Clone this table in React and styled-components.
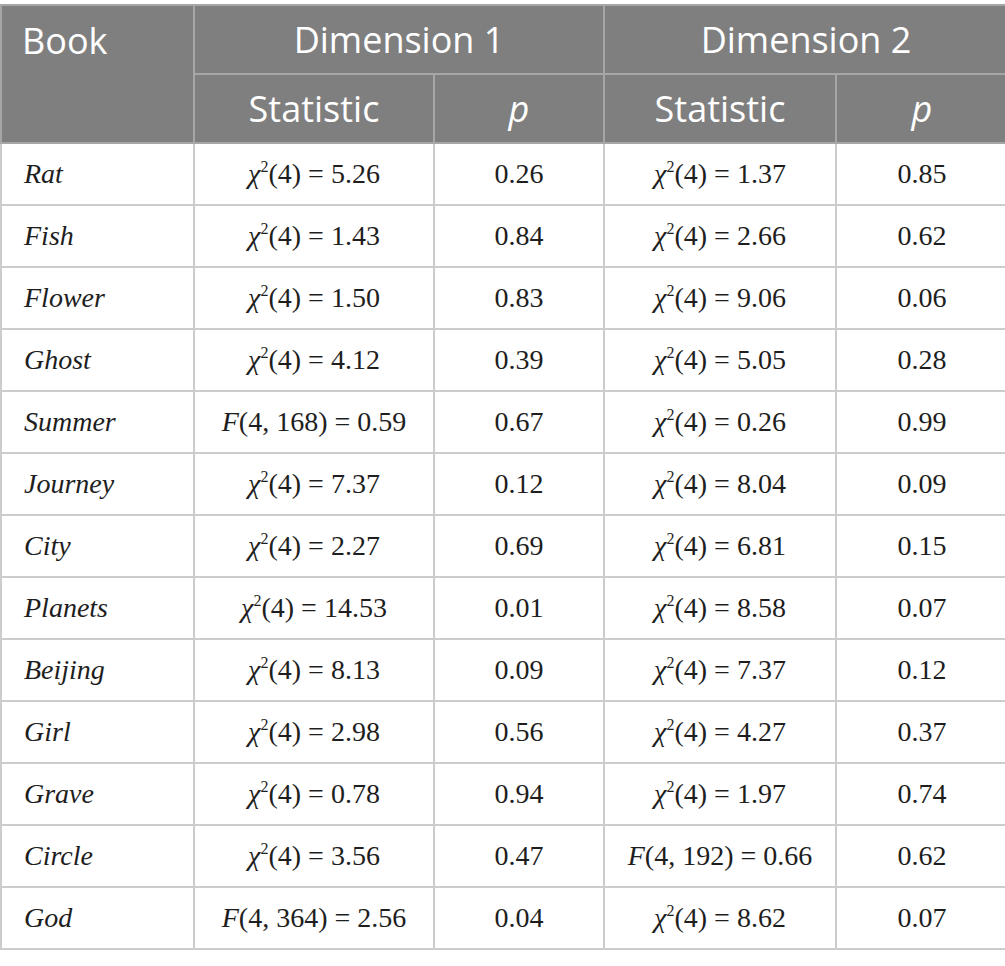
import styled, { createGlobalStyle } from "styled-components";

const GlobalStyle = createGlobalStyle`
  body {
    margin: 0;
    background: #ffffff;
  }
`;

const Wrap = styled.div`
  padding-top: 4px;
  width: 1005px;
  overflow: hidden;
`;

const Table = styled.table`
  border-collapse: collapse;
  width: 1007px;
  table-layout: fixed;
`;

const HeadCell = styled.th`
  background: #7f7f7f;
  color: #ffffff;
  font-family: "Open Sans", "Liberation Sans", sans-serif;
  font-weight: 400;
  font-size: 36px;
  border: 2px solid #a6a6a6;
  text-align: ${(p) => (p.$left ? "left" : "center")};
  vertical-align: ${(p) => (p.$top ? "top" : "middle")};
  padding: ${(p) => (p.$left ? "13px 20px 0" : "0")};
  height: ${(p) => p.$h || 67}px;
  font-style: ${(p) => (p.$italic ? "italic" : "normal")};
  line-height: 1.2;
`;

const Cell = styled.td`
  font-family: "Liberation Serif", "Times New Roman", serif;
  font-size: 28px;
  color: #1e1e1e;
  height: 60px;
  border: 2px solid #cccccc;
  text-align: ${(p) => (p.$left ? "left" : "center")};
  padding: ${(p) => (p.$left ? "0 22px" : "0")};
  font-style: ${(p) => (p.$italic ? "italic" : "normal")};
  white-space: nowrap;
`;

const Chi = styled.span`
  font-style: italic;
`;

const Sup = styled.sup`
  font-size: 16px;
  vertical-align: 11px;
  line-height: 0;
  margin-left: 0;
`;

const rows = [
  ["Rat", ["c", "5.26"], "0.26", ["c", "1.37"], "0.85"],
  ["Fish", ["c", "1.43"], "0.84", ["c", "2.66"], "0.62"],
  ["Flower", ["c", "1.50"], "0.83", ["c", "9.06"], "0.06"],
  ["Ghost", ["c", "4.12"], "0.39", ["c", "5.05"], "0.28"],
  ["Summer", ["f", "168", "0.59"], "0.67", ["c", "0.26"], "0.99"],
  ["Journey", ["c", "7.37"], "0.12", ["c", "8.04"], "0.09"],
  ["City", ["c", "2.27"], "0.69", ["c", "6.81"], "0.15"],
  ["Planets", ["c", "14.53"], "0.01", ["c", "8.58"], "0.07"],
  ["Beijing", ["c", "8.13"], "0.09", ["c", "7.37"], "0.12"],
  ["Girl", ["c", "2.98"], "0.56", ["c", "4.27"], "0.37"],
  ["Grave", ["c", "0.78"], "0.94", ["c", "1.97"], "0.74"],
  ["Circle", ["c", "3.56"], "0.47", ["f", "192", "0.66"], "0.62"],
  ["God", ["f", "364", "2.56"], "0.04", ["c", "8.62"], "0.07"],
];

const Stat = ({ v }) =>
  v[0] === "c" ? (
    <>
      <Chi>χ</Chi>
      <Sup>2</Sup>(4) = {v[1]}
    </>
  ) : (
    <>
      <Chi>F</Chi>(4, {v[1]}) = {v[2]}
    </>
  );

export default function App() {
  return (
    <Wrap>
      <GlobalStyle />
      <Table>
        <colgroup>
          <col style={{ width: 193 }} />
          <col style={{ width: 240 }} />
          <col style={{ width: 170 }} />
          <col style={{ width: 232 }} />
          <col style={{ width: 172 }} />
        </colgroup>
        <thead>
          <tr>
            <HeadCell rowSpan={2} $left $top>
              Book
            </HeadCell>
            <HeadCell colSpan={2} $h={67}>
              Dimension 1
            </HeadCell>
            <HeadCell colSpan={2} $h={67}>
              Dimension 2
            </HeadCell>
          </tr>
          <tr>
            <HeadCell $h={67}>Statistic</HeadCell>
            <HeadCell $italic>p</HeadCell>
            <HeadCell>Statistic</HeadCell>
            <HeadCell $italic>p</HeadCell>
          </tr>
        </thead>
        <tbody>
          {rows.map((r) => (
            <tr key={r[0]}>
              <Cell $left $italic>
                {r[0]}
              </Cell>
              <Cell>
                <Stat v={r[1]} />
              </Cell>
              <Cell>{r[2]}</Cell>
              <Cell>
                <Stat v={r[3]} />
              </Cell>
              <Cell>{r[4]}</Cell>
            </tr>
          ))}
        </tbody>
      </Table>
    </Wrap>
  );
}
